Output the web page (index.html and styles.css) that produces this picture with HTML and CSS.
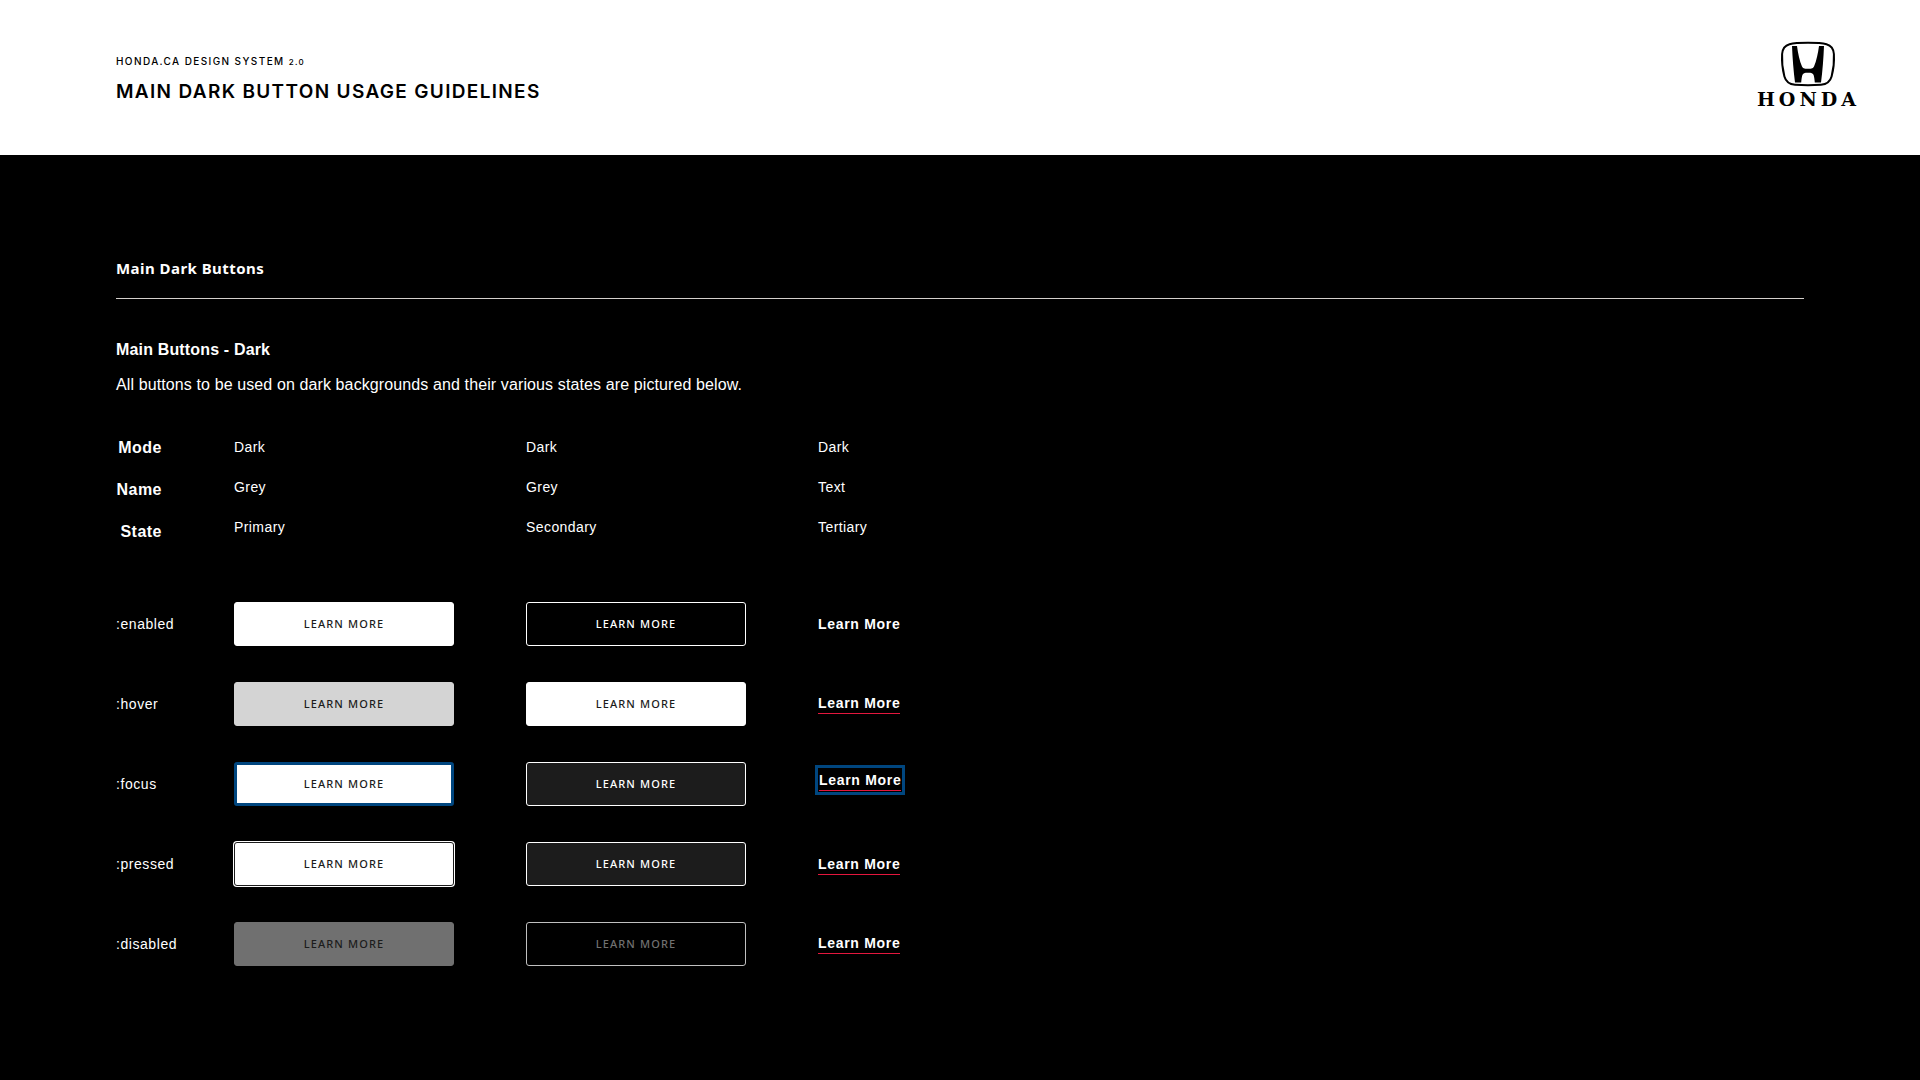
FILE: index.html
```html
<!DOCTYPE html>
<html lang="en">
<head>
<meta charset="utf-8">
<meta name="viewport" content="width=device-width, initial-scale=1">
<title>Main Dark Button Usage Guidelines</title>
<link rel="stylesheet" href="styles.css">
</head>
<body>
<header class="page-header">
  <div class="titles">
    <p class="eyebrow">Honda.ca Design System <span class="version">2.0</span></p>
    <h1 class="page-title">Main Dark Button Usage Guidelines</h1>
  </div>
  <div class="brand">
    <svg class="brand-mark" width="56" height="46" viewBox="0 0 56 46" aria-hidden="true">
      <path d="M28 1.8C36 1.8 43 2.3 46.500 3.200C51 4.400 53.500 7.500 53.900 13C54.300 20 53.600 28 51.600 35.500C50 41.300 46.500 43.300 41 43.800C33 44.400 23 44.400 15 43.800C9.500 43.300 6 41.300 4.400 35.500C2.400 28 1.700 20 2.100 13C2.500 7.500 5 4.400 9.500 3.200C13 2.300 20 1.800 28 1.800Z" fill="none" stroke="#000" stroke-width="2"/>
      <path d="M12 5H17C18 12 19.500 20 22 25.500C22.800 27.300 24 27.800 28 27.800C32 27.800 33.200 27.300 34 25.500C36.500 20 38 12 39 5H44C43.500 17 42.500 30 41 41.500H34.800C34.500 38 34.200 36 33.600 34C33 32.300 31.500 31.800 28 31.800C24.500 31.800 23 32.300 22.400 34C21.800 36 21.500 38 21.200 41.500H15C13.500 30 12.500 17 12 5Z"/>
    </svg>
    <span class="brand-name">HONDA</span>
  </div>
</header>

<main class="content">
  <h2 class="section-title">Main Dark Buttons</h2>
  <h3 class="group-title">Main Buttons - Dark</h3>
  <p class="intro">All buttons to be used on dark backgrounds and their various states are pictured below.</p>

  <div class="specs">
    <ul class="spec-labels"><li>Mode</li><li>Name</li><li>State</li></ul>
    <ul class="spec-values"><li>Dark</li><li>Grey</li><li>Primary</li></ul>
    <ul class="spec-values"><li>Dark</li><li>Grey</li><li>Secondary</li></ul>
    <ul class="spec-values"><li>Dark</li><li>Text</li><li>Tertiary</li></ul>
  </div>

  <table class="states">
    <tbody>
      <tr>
        <th scope="row">:enabled</th>
        <td><button type="button" class="btn primary">Learn More</button></td>
        <td><button type="button" class="btn secondary">Learn More</button></td>
        <td><a href="#" class="text-link">Learn More</a></td>
      </tr>
      <tr>
        <th scope="row">:hover</th>
        <td><button type="button" class="btn primary is-hover">Learn More</button></td>
        <td><button type="button" class="btn secondary is-hover">Learn More</button></td>
        <td><a href="#" class="text-link underlined">Learn More</a></td>
      </tr>
      <tr>
        <th scope="row">:focus</th>
        <td><button type="button" class="btn primary is-focus">Learn More</button></td>
        <td><button type="button" class="btn secondary is-active">Learn More</button></td>
        <td class="focus-cell"><span class="focus-ring"><a href="#" class="text-link underlined">Learn More</a></span></td>
      </tr>
      <tr>
        <th scope="row">:pressed</th>
        <td><button type="button" class="btn primary is-pressed">Learn More</button></td>
        <td><button type="button" class="btn secondary is-active">Learn More</button></td>
        <td><a href="#" class="text-link underlined is-pressed">Learn More</a></td>
      </tr>
      <tr>
        <th scope="row">:disabled</th>
        <td><button type="button" class="btn primary" disabled>Learn More</button></td>
        <td><button type="button" class="btn secondary" disabled>Learn More</button></td>
        <td><a href="#" class="text-link underlined">Learn More</a></td>
      </tr>
    </tbody>
  </table>
</main>
</body>
</html>
```
FILE: styles.css
```css
* { box-sizing: border-box; }

body {
  margin: 0;
  min-height: 100vh;
  background: #000;
  color: #fff;
  font-family: "Liberation Sans", Arial, sans-serif;
}

h1, h2, h3, p, ul { margin: 0; padding: 0; }
ul { list-style: none; }

.page-header {
  display: flex;
  justify-content: space-between;
  align-items: flex-start;
  padding: 41px 60px 44px 116px;
  min-height: 155px;
  background: #fff;
  color: #000;
}

.titles { padding-top: 12px; text-transform: uppercase; }

.eyebrow {
  font: 500 10px/16px Inter, sans-serif;
  letter-spacing: 0.14em;
}

.version { font-size: 8px; }

.page-title {
  margin-top: 10px;
  font: 600 19px/24px Inter, sans-serif;
  letter-spacing: 0.07em;
}

.brand {
  display: flex;
  flex-direction: column;
  align-items: center;
  gap: 3px;
}

.brand-mark { display: block; }

.brand-name {
  font: 700 19px/18px "DejaVu Serif", serif;
  letter-spacing: 4px;
}

.content { padding: 101px 116px 96px; }

.section-title {
  padding-bottom: 18px;
  border-bottom: 1px solid #d4d0cc;
  font: 700 15px/24px "Noto Sans", sans-serif;
  letter-spacing: 0.03em;
}

.group-title {
  margin-top: 41px;
  font-size: 16px;
  line-height: 20px;
  letter-spacing: 0.01em;
}

.intro {
  margin-top: 15px;
  font-size: 16px;
  line-height: 20px;
  letter-spacing: 0.007em;
}

.specs { display: flex; gap: 72px; margin-top: 32px; }

.spec-labels {
  width: 46px;
  text-align: right;
  font-size: 16px;
  font-weight: 700;
  line-height: 42px;
  letter-spacing: 0.03em;
}

.spec-values {
  width: 220px;
  font-size: 14px;
  line-height: 40px;
  letter-spacing: 0.03em;
}

.states { margin-top: 31px; border-collapse: collapse; }
.states tr { height: 80px; }
.states td { width: 292px; padding: 0; }
.states th {
  width: 118px;
  padding: 0;
  text-align: left;
  font-size: 14px;
  font-weight: 400;
  letter-spacing: 0.04em;
}

.btn {
  display: block;
  width: 220px;
  height: 44px;
  padding: 0;
  border: 1px solid #fff;
  border-radius: 3px;
  background: #fff;
  color: #1c1c1c;
  font: 500 11px/16px "Noto Sans", sans-serif;
  letter-spacing: 0.1em;
  text-transform: uppercase;
}

.primary.is-hover { border-color: #d4d4d4; background: #d4d4d4; }
.primary.is-focus { border: 3px solid #00467f; }
.primary.is-pressed { border-color: #1c1c1c; box-shadow: 0 0 0 1px #fff; }
.primary:disabled { border-color: #707070; background: #707070; }

.secondary { background: #000; color: #fff; }
.secondary.is-hover { background: #fff; color: #1c1c1c; }
.secondary.is-active { background: #1c1c1c; }
.secondary:disabled { border-color: #c0c0c0; color: #707070; }

.text-link {
  display: block;
  width: max-content;
  color: #fff;
  font-size: 14px;
  font-weight: 700;
  line-height: 16px;
  letter-spacing: 0.05em;
  text-decoration: none;
}

.underlined { padding-bottom: 2px; border-bottom: 1px solid #e4173e; }
.underlined.is-pressed { padding-top: 3px; }

.states .focus-cell { padding-bottom: 8px; }
.focus-ring {
  display: block;
  width: max-content;
  margin-left: -3px;
  padding: 4px 1px 1px;
  border: 3px solid #00467f;
}
```
